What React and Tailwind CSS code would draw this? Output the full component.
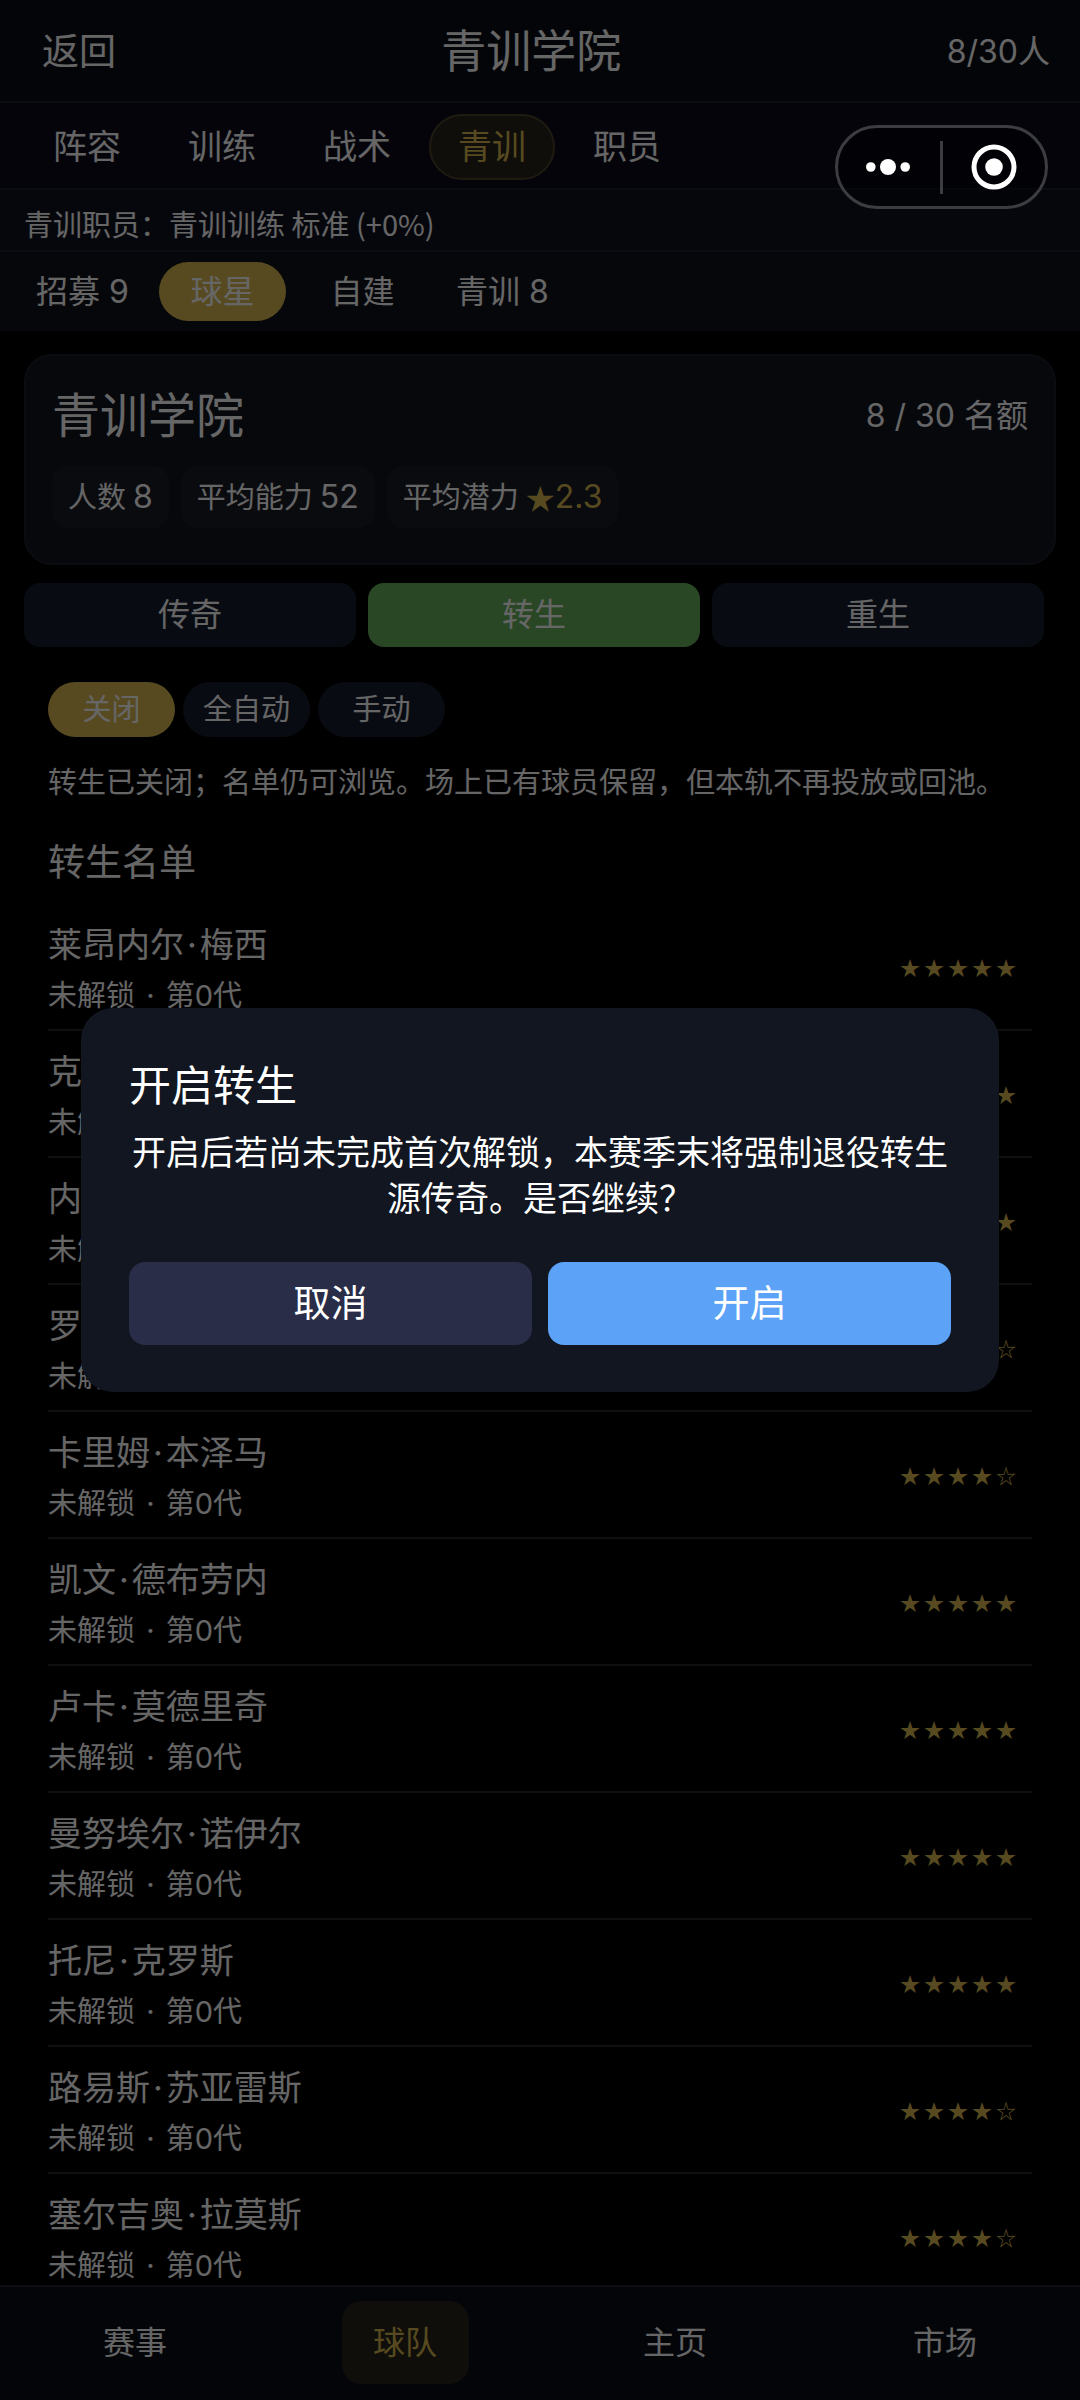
import { useState } from 'react'

const TABS = ['阵容', '训练', '战术', '青训', '职员']
const SUB_TABS = ['招募 9', '球星', '自建', '青训 8']
const TRACKS = ['传奇', '转生', '重生']
const MODES = ['关闭', '全自动', '手动']
const NAV = ['赛事', '球队', '主页', '市场']

const PLAYERS = [
  { name: ['莱昂内尔', '梅西'], stars: 5 },
  { name: ['克里斯蒂亚诺', '罗纳尔多'], stars: 5 },
  { name: ['内马尔'], stars: 5 },
  { name: ['罗伯特', '莱万多夫斯基'], stars: 4 },
  { name: ['卡里姆', '本泽马'], stars: 4 },
  { name: ['凯文', '德布劳内'], stars: 5 },
  { name: ['卢卡', '莫德里奇'], stars: 5 },
  { name: ['曼努埃尔', '诺伊尔'], stars: 5 },
  { name: ['托尼', '克罗斯'], stars: 5 },
  { name: ['路易斯', '苏亚雷斯'], stars: 4 },
  { name: ['塞尔吉奥', '拉莫斯'], stars: 4 },
]

export default function App() {
  const [tab, setTab] = useState('青训')
  const [sub, setSub] = useState('球星')
  const [track, setTrack] = useState('转生')
  const [mode, setMode] = useState('关闭')
  const [nav, setNav] = useState('球队')
  const [confirming, setConfirming] = useState(true)

  return (
    <div className="h-screen flex flex-col overflow-hidden bg-black text-white font-['Inter','Noto_Sans_CJK_SC',sans-serif]">
      <header className="shrink-0 flex items-center justify-between h-[103px] pt-0.5 pl-[42px] pr-[30px] bg-[#0b0e18] border-b-2 border-[#1c1f2b]">
        <button className="text-[37px] leading-none">返回</button>
        <h1 className="text-[45px] leading-none">青训学院</h1>
        <span className="text-[32px] leading-none">8/30人</span>
      </header>

      <nav className="shrink-0 flex gap-[9px] px-6 pt-[11px] pb-2 bg-[#0a0b1a] border-b-2 border-[#1c1f2b]">
        {TABS.map((t) => (
          <button key={t} onClick={() => setTab(t)}
            className={`w-[126px] h-[66px] rounded-full border-2 text-[34px] leading-none ${t === tab ? 'bg-[#28231c] border-[#4e4428] text-[#d9b950]' : 'border-transparent'}`}>
            {t}
          </button>
        ))}
      </nav>

      <p className="shrink-0 px-6 pt-[11px] pb-[5px] text-[29px] leading-[44px] bg-[#10121f] border-b-2 border-[#1c1f2b] font-['Noto_Sans_CJK_SC',sans-serif]">青训职员：青训训练 标准 (+0%)</p>

      <nav className="shrink-0 flex gap-[13px] px-[19px] py-[10px] bg-[#10121c]">
        {SUB_TABS.map((t) => (
          <button key={t} onClick={() => setSub(t)}
            className={`w-[127px] h-[59px] rounded-full text-[32px] leading-none ${t === sub ? 'bg-[#d9b950]' : ''}`}>
            {t}
          </button>
        ))}
      </nav>

      <main className="flex-1 min-h-0 overflow-hidden px-6 pt-[23px]">
        <section className="rounded-[28px] border-2 border-[#1c1f2b] bg-[#10141f] px-[26px] pt-7 pb-[35px]">
          <div className="flex items-center justify-between">
            <h2 className="text-[48px] leading-[64px]">青训学院</h2>
            <span className="text-[32px]">8 / 30 名额</span>
          </div>
          <div className="flex gap-3 mt-[18px]">
            <Stat label="人数" value="8" />
            <Stat label="平均能力" value="52" />
            <Stat label="平均潜力" value="2.3" star />
          </div>
        </section>

        <div className="flex gap-3 mt-[18px] mr-3">
          {TRACKS.map((t) => (
            <button key={t} onClick={() => setTrack(t)}
              className={`flex-1 h-16 rounded-2xl text-[32px] leading-none ${t === track ? 'bg-[#69b25d]' : 'bg-[#161d2e]'}`}>
              {t}
            </button>
          ))}
        </div>

        <div className="px-6">
          <div className="flex gap-2 mt-[35px]">
            {MODES.map((m) => (
              <button key={m} onClick={() => (m === '关闭' ? setMode(m) : setConfirming(true))}
                className={`w-[127px] h-[55px] rounded-full text-[29px] leading-none ${m === mode ? 'bg-[#d9b950]' : 'bg-[#161d2e]'}`}>
                {m}
              </button>
            ))}
          </div>
          <p className="mt-6 text-[29px] leading-[44px]">转生已关闭；名单仍可浏览。场上已有球员保留，但本轨不再投放或回池。</p>
          <h3 className="mt-8 mb-[15px] text-[37px] leading-[52px]">转生名单</h3>
          <ul>
            {PLAYERS.map((p) => <PlayerRow key={p.name[0]} player={p} />)}
          </ul>
        </div>
      </main>

      <nav className="shrink-0 grid grid-cols-4 justify-items-center pt-[14px] pb-4 bg-[#0c0e18] border-t-2 border-[#24252d]">
        {NAV.map((n) => (
          <button key={n} onClick={() => setNav(n)}
            className={`w-[127px] h-[83px] rounded-[20px] text-[32px] leading-none ${n === nav ? 'bg-[#28251c] text-[#d9b950]' : ''}`}>
            {n}
          </button>
        ))}
      </nav>

      {confirming && <ConfirmDialog onCancel={() => setConfirming(false)} onOk={() => { setMode('全自动'); setConfirming(false) }} />}
      <Capsule />
    </div>
  )
}

function Stat({ label, value, star }) {
  return (
    <div className="flex items-center gap-[7px] h-[62px] px-4 rounded-2xl bg-[#1a1c26] text-[29px] leading-none">
      <span>{label}</span>
      <span className={`flex items-center text-[32px] ${star ? 'text-[#d9b950]' : ''}`}>
        {star && <span className="text-[29px] font-['Noto_Sans_CJK_SC',sans-serif]">★</span>}
        {value}
      </span>
    </div>
  )
}

function PlayerRow({ player }) {
  const [first, last] = player.name
  return (
    <li className="flex items-center justify-between pt-[17px] pb-[14px] pr-4 border-b-2 border-[#26272d]">
      <div>
        <div className="text-[34px] leading-[47px]">{first}{last && <span className="mx-[3px]">·</span>}{last}</div>
        <div className="mt-[9px] text-[29px] leading-[38px]">未解锁<span className="mx-[3px]"> · </span>第0代</div>
      </div>
      <div className="flex gap-1 text-[20px] leading-none text-[#d9b950] font-['Noto_Sans_CJK_SC',sans-serif]">
        {[1, 2, 3, 4, 5].map((n) => <span key={n}>{n <= player.stars ? '★' : '☆'}</span>)}
      </div>
    </li>
  )
}

function ConfirmDialog({ onCancel, onOk }) {
  return (
    <div className="fixed inset-0 z-40 flex items-center justify-center bg-black/60">
      <div role="dialog" aria-modal="true" aria-labelledby="dlg-title" className="w-[85%] rounded-[32px] bg-[#111620] px-12 pt-12 pb-[47px]">
        <h2 id="dlg-title" className="text-[42px] leading-[60px]">开启转生</h2>
        <p className="mt-[14px] text-[34px] leading-[46px] text-center">开启后若尚未完成首次解锁，本赛季末将强制退役转生源传奇。是否继续？</p>
        <div className="flex gap-4 mt-10">
          <button onClick={onCancel} className="flex-1 h-[83px] rounded-2xl bg-[#2a2d47] text-[37px] leading-none">取消</button>
          <button onClick={onOk} className="flex-1 h-[83px] rounded-2xl bg-[#5ca3f8] text-[37px] leading-none">开启</button>
        </div>
      </div>
    </div>
  )
}

// host app menu / close capsule, floats above everything
function Capsule() {
  return (
    <div className="fixed z-50 top-[125px] right-8 flex items-center w-[213px] h-[84px] rounded-full border-[3px] border-[#3c3d40] bg-black/40">
      <button aria-label="更多" className="flex-1 grid place-items-center">
        <svg width="46" height="18" viewBox="0 0 46 18" fill="#fff">
          <circle cx="4.8" cy="9" r="4.8" />
          <circle cx="22" cy="9" r="8" />
          <circle cx="39.2" cy="9" r="4.8" />
        </svg>
      </button>
      <span className="w-[3px] h-[53px] bg-[#3c3d40]" />
      <button aria-label="关闭小程序" className="flex-1 grid place-items-center">
        <svg width="46" height="46" viewBox="0 0 46 46">
          <circle cx="23" cy="23" r="20" fill="none" stroke="#fff" strokeWidth="5" />
          <circle cx="23" cy="23" r="8.8" fill="#fff" />
        </svg>
      </button>
    </div>
  )
}
